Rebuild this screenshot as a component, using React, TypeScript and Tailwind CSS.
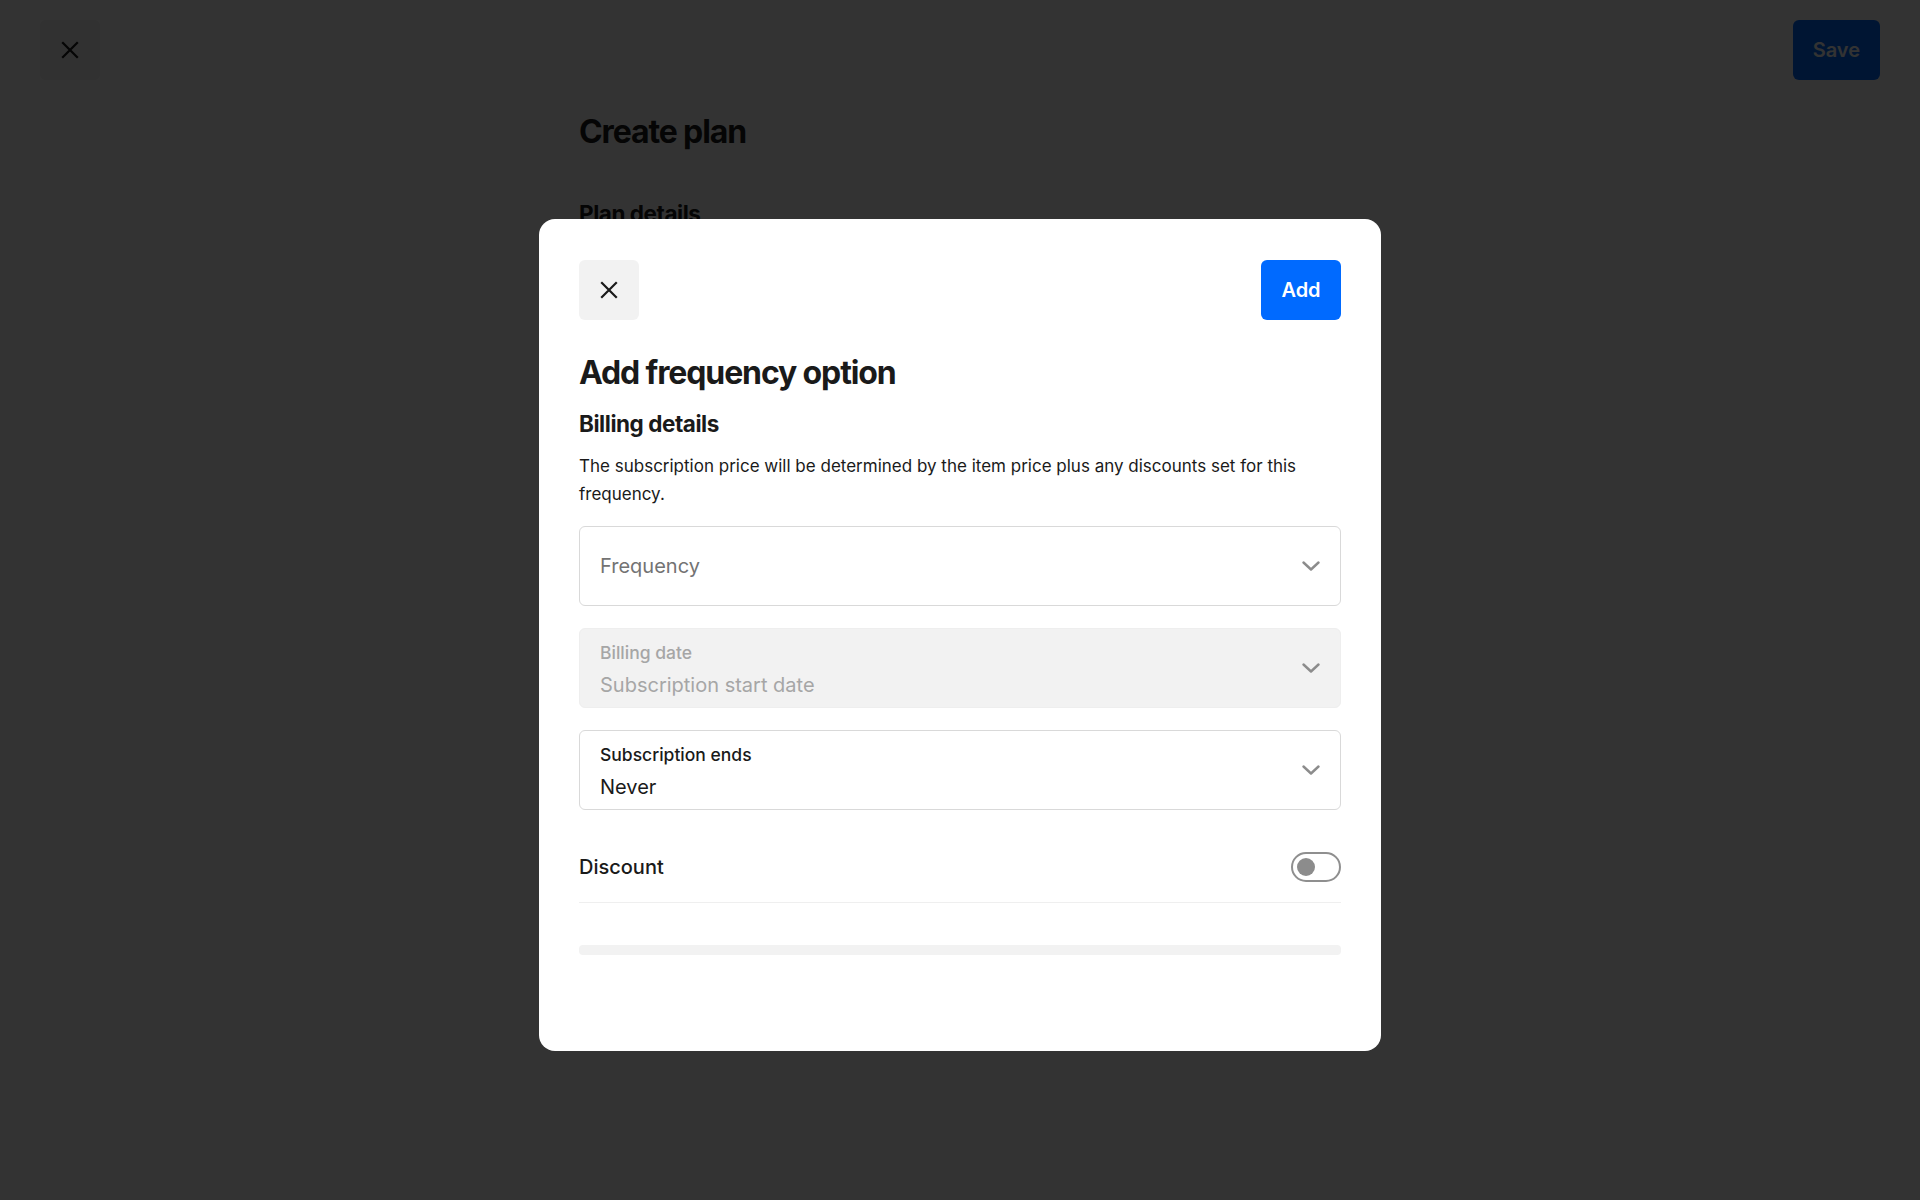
import { useState } from 'react';

const FONT = "font-['Inter','Noto_Sans',sans-serif]";

function CloseIcon({ className = '' }: { className?: string }) {
  return (
    <svg width="18" height="18" viewBox="0 0 18 18" fill="none" className={className}>
      <path d="M2 2L16 16M16 2L2 16" stroke="currentColor" strokeWidth="2.2" strokeLinecap="square" />
    </svg>
  );
}

function Chevron() {
  return (
    <svg width="18" height="10" viewBox="0 0 18 10" fill="none" className="shrink-0 text-[#8c8c8c]">
      <path d="M1.5 1.5L9 8.5L16.5 1.5" stroke="currentColor" strokeWidth="2.4" strokeLinecap="round" strokeLinejoin="round" />
    </svg>
  );
}

function SelectField({ label, value, placeholder, disabled }: { label?: string; value?: string; placeholder?: string; disabled?: boolean }) {
  return (
    <div className={`flex h-20 items-center justify-between rounded-md border px-5 ${disabled ? 'border-[#eeeeee] bg-[#f2f2f2]' : 'border-[#d9d9d9] bg-white'}`}>
      <div className={`flex flex-col gap-[5px] ${label ? 'pt-[3px]' : ''}`}>
        {label && (
          <span className={`text-[17.5px] leading-[25px] font-medium ${disabled ? 'text-[#a6a6a6]' : 'text-[#1a1a1a]'}`}>{label}</span>
        )}
        {placeholder && <span className="text-[20px] leading-[30px] text-[#737373]">{placeholder}</span>}
        {value && (
          <span className={`text-[20px] leading-[30px] ${disabled ? 'text-[#a6a6a6]' : 'text-[#1a1a1a]'}`}>{value}</span>
        )}
      </div>
      <Chevron />
    </div>
  );
}

export default function App() {
  const [discount, setDiscount] = useState(false);

  return (
    <div className={`relative min-h-screen bg-white text-[#1a1a1a] ${FONT}`}>
      {/* page under the dialog */}
      <div className="flex items-start justify-between px-10 pt-5">
        <button className="flex h-[60px] w-[60px] items-center justify-center rounded-md bg-[#f2f2f2] text-[#1a1a1a]">
          <CloseIcon />
        </button>
        <button className="h-[60px] rounded-md bg-[#006aff] px-5 text-[20px] font-semibold text-white">Save</button>
      </div>
      <div className="mx-auto w-[762px]">
        <h1 className="mt-8 text-[32px] leading-[40px] font-bold tracking-[-0.035em]">Create plan</h1>
        <h2 className="mt-12 text-[22.5px] leading-[28px] font-bold tracking-[-0.02em]">Plan details</h2>
      </div>

      {/* dialog */}
      <div className="fixed inset-0 flex justify-center bg-black/80 pt-[219px]">
        <div className="flex h-[832px] w-[842px] flex-col rounded-2xl bg-white px-10 pt-[41px]">
          <div className="flex items-center justify-between">
            <button className="flex h-[60px] w-[60px] items-center justify-center rounded-md bg-[#f2f2f2] text-[#1a1a1a]">
              <CloseIcon />
            </button>
            <button className="h-[60px] w-20 rounded-md bg-[#006aff] text-[20px] font-semibold text-white">Add</button>
          </div>

          <h2 className="mt-[33px] text-[32px] leading-[40px] font-bold tracking-[-0.035em]">Add frequency option</h2>
          <h3 className="mt-[17px] text-[22.5px] leading-[28px] font-bold tracking-[-0.02em]">Billing details</h3>
          <p className="mt-[14px] text-[17px] leading-[28px]">
            The subscription price will be determined by the item price plus any discounts set for this frequency.
          </p>

          <div className="mt-[18px] flex flex-col gap-[22px]">
            <SelectField placeholder="Frequency" />
            <SelectField label="Billing date" value="Subscription start date" disabled />
            <SelectField label="Subscription ends" value="Never" />
          </div>

          <div className="mt-[21px] flex h-[72px] items-center justify-between border-b border-[#efefef]">
            <span className="text-[20px] font-medium">Discount</span>
            <button
              onClick={() => setDiscount(!discount)}
              className={`flex h-[30px] w-[50px] items-center rounded-full border-2 px-1 ${discount ? 'justify-end border-[#006aff] bg-[#006aff]' : 'border-[#8f8f8f] bg-white'}`}
            >
              <span className={`h-[18px] w-[18px] rounded-full ${discount ? 'bg-white' : 'bg-[#8c8c8c]'}`} />
            </button>
          </div>

          <div className="mt-[42px] h-[10px] rounded-sm bg-[#f2f2f2]" />
        </div>
      </div>
    </div>
  );
}
